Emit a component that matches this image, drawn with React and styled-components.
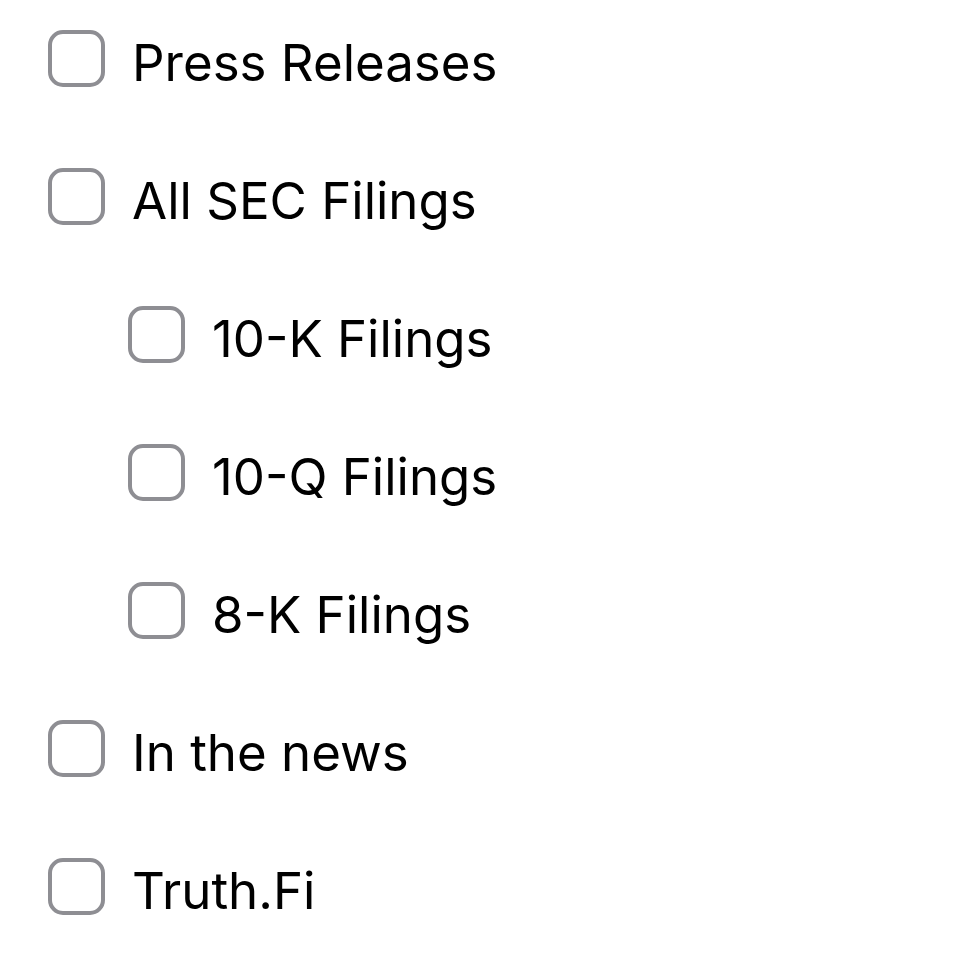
import React from "react";
import styled, { createGlobalStyle } from "styled-components";

const GlobalStyle = createGlobalStyle`
  html, body {
    margin: 0;
    padding: 0;
    background: #ffffff;
  }
  body {
    font-family: Inter, "Noto Sans", sans-serif;
  }
`;

const List = styled.ul`
  list-style: none;
  margin: 0;
  padding: 30px 0 0 48px;
  display: flex;
  flex-direction: column;
  gap: 81px;
`;

const Row = styled.li`
  display: flex;
  align-items: center;
  gap: 27px;
  height: 57px;
  padding-left: ${(props) => (props.$nested ? 80 : 0)}px;
`;

const Box = styled.input.attrs({ type: "checkbox" })`
  appearance: none;
  margin: 0;
  flex: none;
  width: 57px;
  height: 57px;
  box-sizing: border-box;
  border: 4px solid #8e8e93;
  border-radius: 15px;
  background: #ffffff;
  cursor: pointer;

  &:checked {
    background: #007aff;
    border-color: #007aff;
  }
`;

const Label = styled.label`
  font-family: Inter, "Noto Sans", sans-serif;
  font-size: 51px;
  font-weight: 400;
  color: #000000;
  line-height: 1;
  padding-top: 8px;
  cursor: pointer;
`;

const items = [
  { id: "press", label: "Press Releases" },
  { id: "sec", label: "All SEC Filings" },
  { id: "10k", label: "10-K Filings", nested: true },
  { id: "10q", label: "10-Q Filings", nested: true },
  { id: "8k", label: "8-K Filings", nested: true },
  { id: "news", label: "In the news" },
  { id: "truth", label: "Truth.Fi" },
];

export default function App() {
  return (
    <>
      <GlobalStyle />
      <List>
        {items.map((item) => (
          <Row key={item.id} $nested={item.nested}>
            <Box id={item.id} />
            <Label htmlFor={item.id}>{item.label}</Label>
          </Row>
        ))}
      </List>
    </>
  );
}
